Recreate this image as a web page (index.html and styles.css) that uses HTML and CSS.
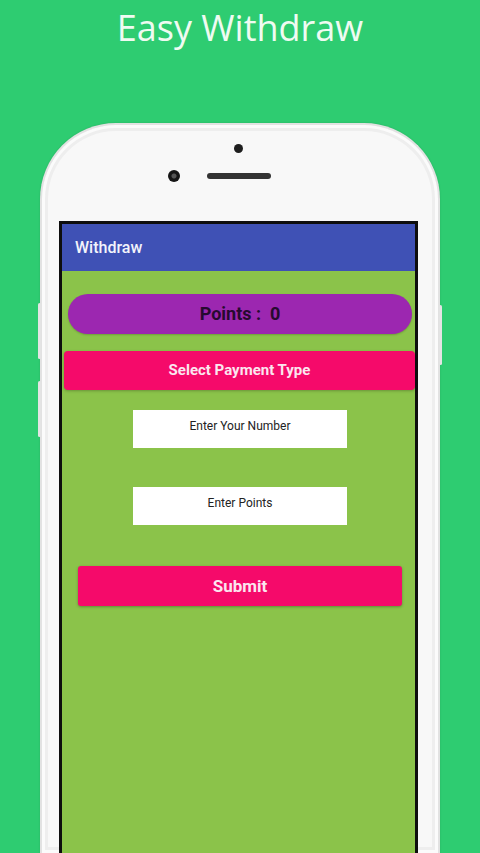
FILE: index.html
```html
<!DOCTYPE html>
<html>
<head>
<meta charset="utf-8">
<link rel="stylesheet" href="styles.css">
</head>
<body>
<div class="page">
  <h1 class="title">Easy Withdraw</h1>
  <div class="phone">
    <div class="bezel">
      <div class="sensor"></div>
      <div class="cam-row">
        <div class="camera"></div>
        <div class="speaker"></div>
      </div>
    </div>
    <div class="screen">
      <div class="toolbar">Withdraw</div>
      <div class="content">
        <div class="points">Points :&nbsp; 0</div>
        <div class="select">Select Payment Type</div>
        <div class="field">Enter Your Number</div>
        <div class="field field-2">Enter Points</div>
        <div class="submit">Submit</div>
      </div>
    </div>
    <div class="btn btn-l1"></div>
    <div class="btn btn-l2"></div>
    <div class="btn btn-r1"></div>
  </div>
</div>
</body>
</html>
```
FILE: styles.css
```css
html, body {
  margin: 0;
  padding: 0;
}
body {
  background: #2ecc71;
  width: 480px;
  height: 853px;
  overflow: hidden;
}
.page {
  display: flex;
  flex-direction: column;
  align-items: center;
  height: 853px;
}
.title {
  margin: 0;
  height: 123px;
  box-sizing: border-box;
  padding-top: 4px;
  font-family: "Open Sans", sans-serif;
  font-weight: 400;
  font-size: 36px;
  line-height: 48px;
  color: #effbf1;
  text-align: center;
}
.phone {
  position: relative;
  width: 400px;
  flex: 1;
  box-sizing: border-box;
  background: #f8f8f8;
  border-radius: 76px 76px 0 0;
  border: 2px solid #e2e2e2;
  border-bottom: none;
  box-shadow: inset 0 0 0 3px #fbfbfb, inset 0 0 0 6px #eeeeee, 0 0 2px rgba(0,0,0,0.15);
  display: flex;
  flex-direction: column;
}
.bezel {
  height: 96px;
  display: flex;
  flex-direction: column;
  align-items: center;
}
.sensor {
  width: 9px;
  height: 9px;
  border-radius: 50%;
  background: #1e1e1e;
  margin-top: 19px;
  margin-left: -4px;
}
.cam-row {
  display: flex;
  align-items: center;
  margin-top: 17px;
  margin-left: -41px;
  gap: 27px;
}
.camera {
  width: 12px;
  height: 12px;
  border-radius: 50%;
  background: radial-gradient(circle at 50% 50%, #555 0 2px, #151515 3px);
}
.speaker {
  width: 64px;
  height: 6px;
  border-radius: 3px;
  background: #333;
}
.screen {
  margin-left: 17px;
  width: 359px;
  flex: 1;
  box-sizing: border-box;
  border: 3px solid #0e0e0e;
  border-bottom: none;
  background: #8bc34a;
  display: flex;
  flex-direction: column;
}
.toolbar {
  height: 47px;
  background: #3f51b5;
  color: #f3f4fb;
  font-family: Roboto, sans-serif;
  font-weight: 500;
  font-size: 16px;
  line-height: 47px;
  padding-left: 13px;
}
.content {
  display: flex;
  flex-direction: column;
  align-items: center;
  font-family: Roboto, sans-serif;
}
.points {
  margin-top: 23px;
  margin-left: 3px;
  width: 344px;
  height: 40px;
  border-radius: 20px;
  background: #9c27b0;
  color: #260a2f;
  font-weight: 700;
  font-size: 18px;
  line-height: 40px;
  text-align: center;
  box-shadow: 0 1px 2px rgba(0,0,0,0.2);
}
.select {
  margin-top: 17px;
  margin-left: 2px;
  width: 351px;
  height: 39px;
  border-radius: 4px;
  background: #f50a6a;
  color: #fbe6ef;
  font-weight: 700;
  font-size: 15px;
  line-height: 39px;
  text-align: center;
  box-shadow: 0 1px 3px rgba(0,0,0,0.25);
}
.field {
  margin-top: 20px;
  width: 214px;
  height: 38px;
  box-sizing: border-box;
  background: #ffffff;
  color: #222;
  font-size: 12px;
  line-height: 14px;
  padding-top: 9px;
  text-align: center;
  margin-left: 3px;
}
.field-2 {
  margin-top: 39px;
}
.submit {
  margin-top: 41px;
  margin-left: 3px;
  width: 324px;
  height: 40px;
  border-radius: 3px;
  background: #f50a6a;
  color: #fbe6ef;
  font-weight: 700;
  font-size: 17px;
  line-height: 40px;
  text-align: center;
  box-shadow: 0 1px 3px rgba(0,0,0,0.3);
}
.btn {
  position: absolute;
  width: 3px;
  background: #e4e4e4;
  border-radius: 2px;
}
.btn-l1 {
  left: -4px;
  top: 178px;
  height: 56px;
}
.btn-l2 {
  left: -4px;
  top: 256px;
  height: 56px;
}
.btn-r1 {
  right: -4px;
  top: 180px;
  height: 60px;
}
```
